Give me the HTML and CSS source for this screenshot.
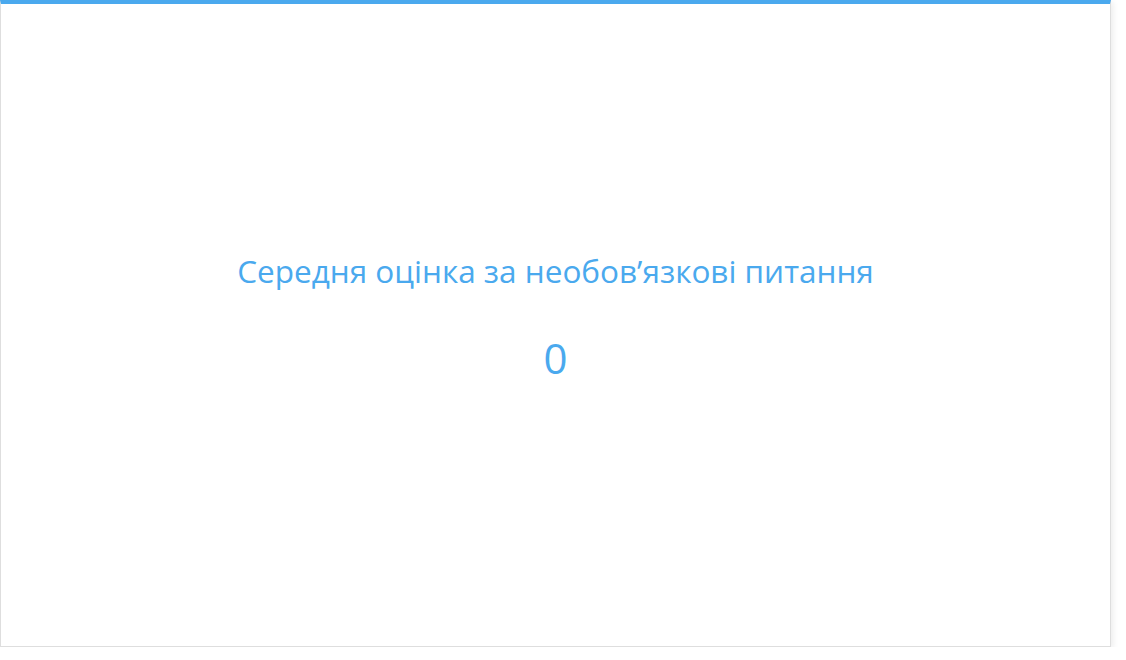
FILE: index.html
```html
<!DOCTYPE html>
<html lang="uk">
<head>
<meta charset="utf-8">
<link rel="stylesheet" href="styles.css">
</head>
<body>
<div class="card">
  <div class="stat">
    <div class="stat-title">Середня оцінка за необов’язкові питання</div>
    <div class="stat-value">0</div>
  </div>
</div>
</body>
</html>
```
FILE: styles.css
```css
html, body {
  margin: 0;
  padding: 0;
  background: #ffffff;
}
body {
  font-family: "Open Sans", "Noto Sans", sans-serif;
}
.card {
  box-sizing: border-box;
  width: 1111px;
  height: 647px;
  border: 1px solid #dedede;
  border-top: 4px solid #4aa9ee;
  box-shadow: 2px 2px 6px rgba(0, 0, 0, 0.08);
  display: flex;
  align-items: center;
  justify-content: center;
  padding-bottom: 16px;
}
.stat {
  display: flex;
  flex-direction: column;
  align-items: center;
  gap: 41px;
  color: #4aa9ee;
}
.stat-title {
  font-size: 31.5px;
  line-height: 40px;
}
.stat-value {
  font-size: 42px;
  line-height: 52px;
}
```
